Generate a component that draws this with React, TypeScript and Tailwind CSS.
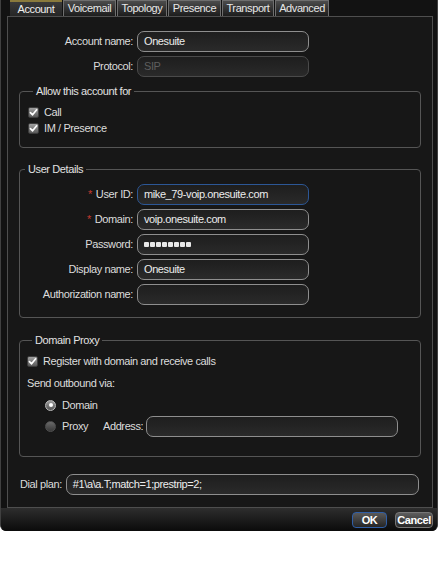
import React from "react";

const TABS = [
  { name: "Account", w: "w-[52px]" },
  { name: "Voicemail", w: "w-[53px]" },
  { name: "Topology", w: "w-[50px]" },
  { name: "Presence", w: "w-[53px]" },
  { name: "Transport", w: "w-[52px]" },
  { name: "Advanced", w: "w-[54px]" },
];

function Check() {
  return (
    <span className="w-[11px] h-[11px] shrink-0 rounded-[2px] border border-[#3c3c3c] bg-linear-to-b from-[#a0a0a0] to-[#5a5a5a] flex items-center justify-center">
      <svg viewBox="0 0 10 10" className="w-[9px] h-[9px]">
        <path d="M1.6 5.2 L4 7.6 L8.5 2" stroke="#fff" strokeWidth="1.8" fill="none" strokeLinecap="round" strokeLinejoin="round" />
      </svg>
    </span>
  );
}

function Radio({ on }: { on?: boolean }) {
  return (
    <span
      className={
        "w-[11px] h-[11px] shrink-0 rounded-full flex items-center justify-center " +
        (on
          ? "bg-linear-to-b from-[#9a9a9a] to-[#555] border border-[#bbb]"
          : "bg-linear-to-b from-[#6a6a6a] to-[#3a3a3a] border border-[#505050]")
      }
    >
      {on && <span className="w-[4px] h-[4px] rounded-full bg-white" />}
    </span>
  );
}

function Field({
  value,
  focus,
  disabled,
  className = "w-[172px]",
  children,
}: {
  value?: string;
  focus?: boolean;
  disabled?: boolean;
  className?: string;
  children?: React.ReactNode;
}) {
  const border = focus ? "border-[#2c5796]" : disabled ? "border-[#4a4a4a]" : "border-[#8e8e8e]";
  return (
    <div
      className={
        "h-[21px] rounded-[7px] border-[1.5px] px-[6px] flex items-center bg-linear-to-b from-[#1e1e1e] to-[#2a2a2a] " +
        border +
        " " +
        (disabled ? "text-[#5e5e5e]" : "text-[#ececec]") +
        " " +
        className
      }
    >
      {children ?? value}
    </div>
  );
}

function Row({
  label,
  labelW,
  req,
  children,
}: {
  label: string;
  labelW: string;
  req?: boolean;
  children: React.ReactNode;
}) {
  return (
    <div className="flex items-center">
      <div className={labelW + " text-right pr-[4px] shrink-0"}>
        {req && <span className="text-[#c43a2f] mr-[4px]">*</span>}
        {label}
      </div>
      {children}
    </div>
  );
}

function Group({ title, className, children }: { title: string; className: string; children: React.ReactNode }) {
  return (
    <fieldset className={"border border-[#555] rounded-[4px] " + className}>
      <legend className="ml-[5px] px-[3px] leading-[13px] text-[#e2e2e2]">{title}</legend>
      {children}
    </fieldset>
  );
}

export default function App() {
  return (
    <div className="w-[441px] h-[564px] bg-white font-['Liberation_Sans',Arial,sans-serif] text-[11px] leading-[13px] tracking-[-0.4px] text-[#dcdcdc]">
      <div className="w-[438px] h-[531px] flex flex-col bg-[#121212] border-x border-[#404040] rounded-b-[6px] overflow-hidden">
        {/* tabs */}
        <div className="h-[16px] flex pl-[9px] gap-[1px] shrink-0">
          {TABS.map((t, i) => (
            <div
              key={t.name}
              className={
                t.w +
                " h-[16px] flex items-center justify-center " +
                (i === 0
                  ? "bg-linear-to-b from-[#3a3a3a] to-[#262626] border-t-2 border-[#8a7a3c] text-[#f0f0f0]"
                  : "bg-linear-to-b from-[#4c4c4c] to-[#1d1d1d] border border-b-0 border-[#6e6e6e] text-[#e8e8e8]")
              }
            >
              {t.name}
            </div>
          ))}
        </div>

        {/* panel */}
        <div className="ml-[6px] w-[426px] h-[492px] shrink-0 border border-[#4e4e4e] bg-[#171717] px-[11px] pt-[14px] flex flex-col">
          <div className="flex flex-col gap-[4px]">
            <Row label="Account name:" labelW="w-[118px]">
              <Field value="Onesuite" />
            </Row>
            <Row label="Protocol:" labelW="w-[118px]">
              <Field value="SIP" disabled />
            </Row>
          </div>

          <Group title="Allow this account for" className="mt-[8px] pt-[6px] pb-[11px] pl-[8px]">
            <div className="h-[16px] flex items-center gap-[5px]">
              <Check />
              <span>Call</span>
            </div>
            <div className="h-[16px] flex items-center gap-[5px]">
              <Check />
              <span>IM / Presence</span>
            </div>
          </Group>

          <Group title="User Details" className="mt-[15px] pt-[8px] pb-[12px] flex flex-col gap-[4px]">
            <Row label="User ID:" labelW="w-[117px]" req>
              <Field value="mike_79-voip.onesuite.com" focus />
            </Row>
            <Row label="Domain:" labelW="w-[117px]" req>
              <Field value="voip.onesuite.com" />
            </Row>
            <Row label="Password:" labelW="w-[117px]">
              <Field>
                <span className="flex gap-[1px]">
                  {Array.from({ length: 8 }).map((_, i) => (
                    <span key={i} className="w-[5px] h-[5px] rounded-[1px] bg-[#e8e8e8]" />
                  ))}
                </span>
              </Field>
            </Row>
            <Row label="Display name:" labelW="w-[117px]">
              <Field value="Onesuite" />
            </Row>
            <Row label="Authorization name:" labelW="w-[117px]">
              <Field value="" />
            </Row>
          </Group>

          <Group title="Domain Proxy" className="mt-[16px] pt-[6px] pb-[19px] pl-[7px]">
            <div className="h-[16px] flex items-center gap-[5px]">
              <Check />
              <span>Register with domain and receive calls</span>
            </div>
            <div className="mt-[7px] h-[14px] flex items-center">Send outbound via:</div>
            <div className="mt-[7px] h-[16px] flex items-center gap-[6px] pl-[18px]">
              <Radio on />
              <span>Domain</span>
            </div>
            <div className="mt-[3px] h-[21px] flex items-center pl-[18px]">
              <Radio />
              <span className="ml-[6px] w-[41px]">Proxy</span>
              <span className="w-[43px]">Address:</span>
              <Field value="" className="w-[252px]" />
            </div>
          </Group>

          <div className="mt-[17px] flex items-center pl-[1px] pr-[2px]">
            <span className="pr-[4px]">Dial plan:</span>
            <Field value="#1\a\a.T;match=1;prestrip=2;" className="flex-1" />
          </div>
        </div>

        {/* buttons */}
        <div className="h-[23px] shrink-0 bg-linear-to-b from-[#2e2e2e] to-[#0b0b0b] flex items-center justify-end gap-[8px] pr-[4px]">
          <button className="w-[35px] h-[16px] rounded-[4px] border border-[#2f5ea6] bg-linear-to-b from-[#5a5a5a] to-[#262626] text-white font-bold leading-[14px]">
            OK
          </button>
          <button className="w-[38px] h-[16px] rounded-[4px] border border-[#777] bg-linear-to-b from-[#5e5e5e] to-[#282828] text-white font-bold leading-[14px]">
            Cancel
          </button>
        </div>
      </div>
    </div>
  );
}
